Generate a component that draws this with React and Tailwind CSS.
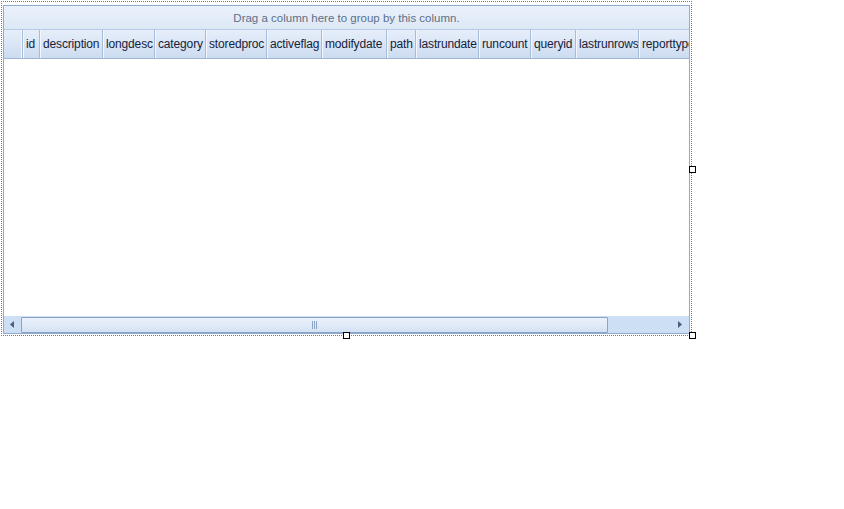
import React from "react"

const columns = [
  { name: "id", w: 17 },
  { name: "description", w: 63 },
  { name: "longdesc", w: 52 },
  { name: "category", w: 51 },
  { name: "storedproc", w: 61 },
  { name: "activeflag", w: 55 },
  { name: "modifydate", w: 65 },
  { name: "path", w: 29 },
  { name: "lastrundate", w: 63 },
  { name: "runcount", w: 52 },
  { name: "queryid", w: 45 },
  { name: "lastrunrows", w: 63 },
  { name: "reporttype", w: 70 },
]

function Handle({ className }) {
  return <div className={`absolute size-[7px] border border-black bg-white ${className}`} />
}

export default function App() {
  return (
    <div className="w-[844px] h-[509px] bg-white" style={{ fontFamily: '"Liberation Sans", Arial, sans-serif' }}>
      <div className="relative w-[693px] h-[337px] pt-[1px] pl-[1px]">
        {/* selection frame */}
        <div className="w-[691px] h-[335px] border border-dotted border-[#777] p-[1px] pt-[3px]">
          <div className="flex flex-col h-[329px] border border-[#8fabd2] bg-white">
            {/* group panel */}
            <div className="h-[24px] pt-[2px] flex items-center justify-center text-[11.5px] text-[#5d6f86] bg-gradient-to-b from-[#eaf1fb] to-[#dde8f6] border-b border-[#b6cae5]">
              Drag a column here to group by this column.
            </div>

            {/* header row */}
            <div className="flex h-[29px] overflow-hidden border-b border-[#9fb6d6] bg-gradient-to-b from-[#e7eefa] to-[#cddcf1]">
              <div className="w-[19px] shrink-0 border-r border-[#a7bcd9] shadow-[inset_-1px_0_0_#f3f7fd]" />
              {columns.map((c) => (
                <div
                  key={c.name}
                  style={{ width: c.w }}
                  className="shrink-0 flex items-center pl-[3px] text-[12px] tracking-[-0.15px] text-[#15233a] whitespace-nowrap overflow-hidden border-r border-[#a7bcd9] shadow-[inset_1px_0_0_#f3f7fd]"
                >
                  {c.name}
                </div>
              ))}
            </div>

            {/* body */}
            <div className="flex-1 bg-white" />

            {/* horizontal scrollbar */}
            <div className="flex items-center h-[17px] bg-[#cddff4]">
              <div className="w-[17px] shrink-0 flex items-center justify-center">
                <svg width="5" height="7" viewBox="0 0 5 7">
                  <path d="M4 0 L0 3.5 L4 7 Z" fill="#4b5d78" />
                </svg>
              </div>
              <div className="w-[587px] h-[16px] shrink-0 flex items-center justify-center border border-[#8aa3c6] rounded-[1px] bg-gradient-to-b from-[#e9f0fb] via-[#e2ebf8] to-[#d3e1f4]">
                <div className="flex gap-[1px]">
                  <div className="w-[1px] h-[8px] bg-[#8aa3c6]" />
                  <div className="w-[1px] h-[8px] bg-[#8aa3c6]" />
                  <div className="w-[1px] h-[8px] bg-[#8aa3c6]" />
                </div>
              </div>
              <div className="flex-1 flex items-center justify-end pr-[6px]">
                <svg width="5" height="7" viewBox="0 0 5 7">
                  <path d="M0 0 L4 3.5 L0 7 Z" fill="#4b5d78" />
                </svg>
              </div>
            </div>
          </div>
        </div>

        {/* resize handles */}
        <Handle className="left-[689px] top-[166px]" />
        <Handle className="left-[343px] top-[332px]" />
        <Handle className="left-[689px] top-[332px]" />
      </div>
    </div>
  )
}
